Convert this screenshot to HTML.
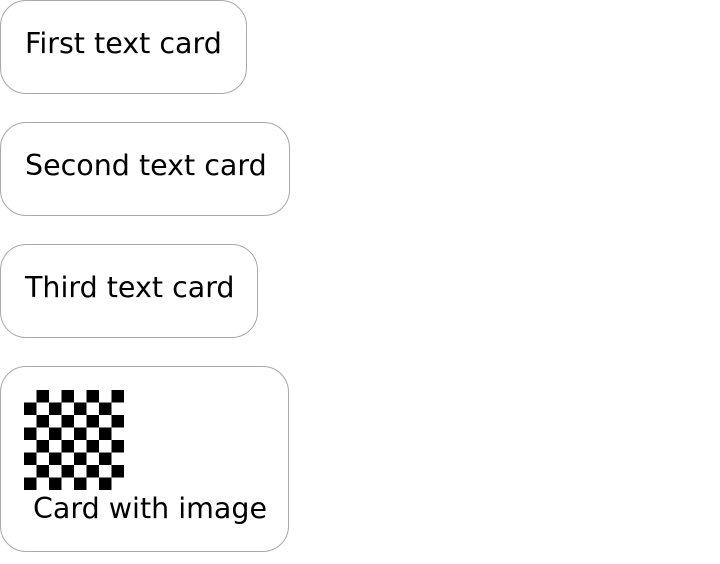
<!DOCTYPE html>
<html><head><style>
body{margin:0;width:720px;height:564px;background:#fff;position:relative;font-family:"DejaVu Sans",sans-serif;}
.c{position:absolute;left:0;box-sizing:border-box;border:1px solid #a8a8a8;border-radius:26px;background:#fff;}
.t{position:absolute;left:24px;font-size:28.5px;color:#000;white-space:nowrap;line-height:1;}
.cb{position:absolute;left:23px;top:23px;width:100px;height:100px;
background-image:conic-gradient(#fff 25%,#000 0 50%,#fff 0 75%,#000 0);background-size:25px 25px;background-position:12.5px 0;}
</style></head><body>
<div class="c" style="top:0;width:247px;height:94px"><div class="t" style="top:29px">First text card</div></div>
<div class="c" style="top:122px;width:290px;height:94px"><div class="t" style="top:29px">Second text card</div></div>
<div class="c" style="top:244px;width:258px;height:94px"><div class="t" style="top:29px">Third text card</div></div>
<div class="c" style="top:366px;width:289px;height:186px"><div class="cb"></div><div class="t" style="left:32px;top:128px">Card with image</div></div>
</body></html>
